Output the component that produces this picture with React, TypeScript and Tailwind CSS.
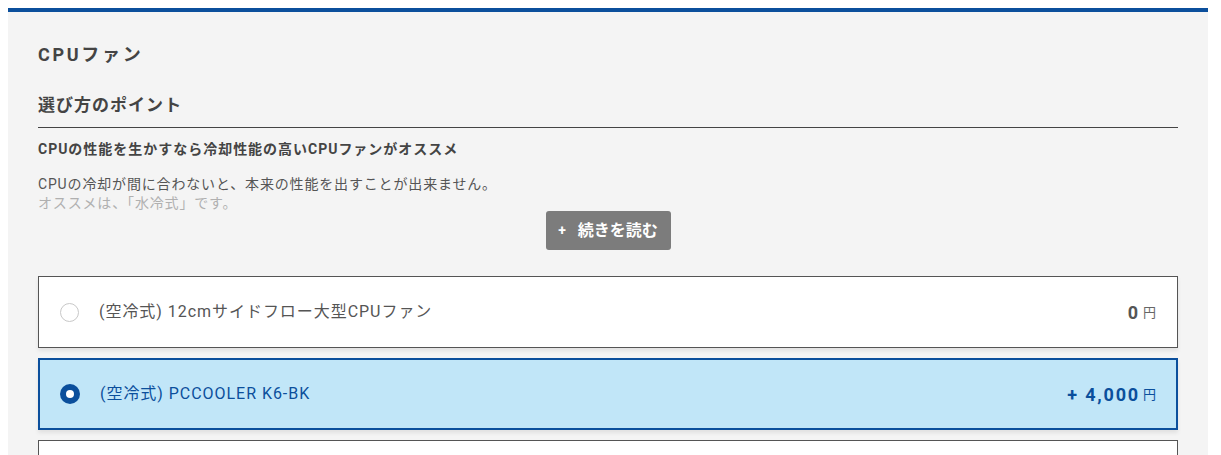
import React from "react";

const font = { fontFamily: "Roboto, 'Noto Sans CJK JP', 'Noto Sans', sans-serif" };

export default function App() {
  return (
    <div className="min-h-[455px] bg-white p-2" style={font}>
      <div className="w-[1200px] border-t-4 border-[#0b4f9c] bg-[#f4f4f4] px-[30px] pb-8">
        <h2 className="pt-[30px] text-[18px] font-bold leading-[26px] tracking-[0.15em] text-[#444]">CPUファン</h2>
        <h3 className="mt-[24px] text-[17px] font-bold leading-[26px] tracking-[0.06em] text-[#444]">選び方のポイント</h3>
        <div className="mt-[9px] h-px bg-[#444]" />
        <p className="mt-[11px] text-[14px] font-bold leading-[20px] tracking-[0.07em] text-[#444]">CPUの性能を生かすなら冷却性能の高いCPUファンがオススメ</p>
        <div className="mt-[16px] text-[14px] leading-[19px] tracking-[0.06em] text-[#555]">
          <p>CPUの冷却が間に合わないと、本来の性能を出すことが出来ません。</p>
          <p className="text-[#b0b0b0]">オススメは、「水冷式」です。</p>
        </div>
        <div className="flex justify-center">
          <button className="mt-[-2px] flex h-[39px] w-[125px] items-center justify-center gap-[12px] rounded-[3px] bg-[#7c7c7c] text-[16px] font-bold text-white">
            <span className="text-[14px]">+</span>
            <span>続きを読む</span>
          </button>
        </div>
        <div className="mt-[26px] flex flex-col gap-[10px]">
          <div className="flex h-[72px] items-center border border-[#555] bg-white pl-[21px] pr-[21px] shadow-[0_3px_4px_rgba(0,0,0,0.08)]">
            <span className="h-[19px] w-[19px] rounded-full border border-[#c8c8c8] bg-white" />
            <span className="ml-[20px] flex-1 text-[16px] tracking-[0.06em] text-[#555]">(空冷式) 12cmサイドフロー大型CPUファン</span>
            <span className="text-[18px] font-bold tracking-[0.1em] text-[#555]">0</span>
            <span className="ml-[3px] mt-[2px] text-[13px] text-[#666]">円</span>
          </div>
          <div className="flex h-[72px] items-center border-2 border-[#0b4f9c] bg-[#c1e6f8] pl-[20px] pr-[20px] shadow-[0_3px_4px_rgba(0,0,0,0.08)]">
            <span className="flex h-[20px] w-[20px] items-center justify-center rounded-full bg-[#0b4f9c]">
              <span className="h-[8px] w-[8px] rounded-full bg-white" />
            </span>
            <span className="ml-[20px] flex-1 text-[16px] tracking-[0.06em] text-[#0b4f9c]">(空冷式) PCCOOLER K6-BK</span>
            <span className="text-[18px] font-bold tracking-[0.1em] text-[#0b4f9c]">+ 4,000</span>
            <span className="ml-[3px] mt-[2px] text-[13px] text-[#0b4f9c]">円</span>
          </div>
          <div className="flex h-[72px] items-center border border-[#555] bg-white" />
        </div>
      </div>
    </div>
  );
}
